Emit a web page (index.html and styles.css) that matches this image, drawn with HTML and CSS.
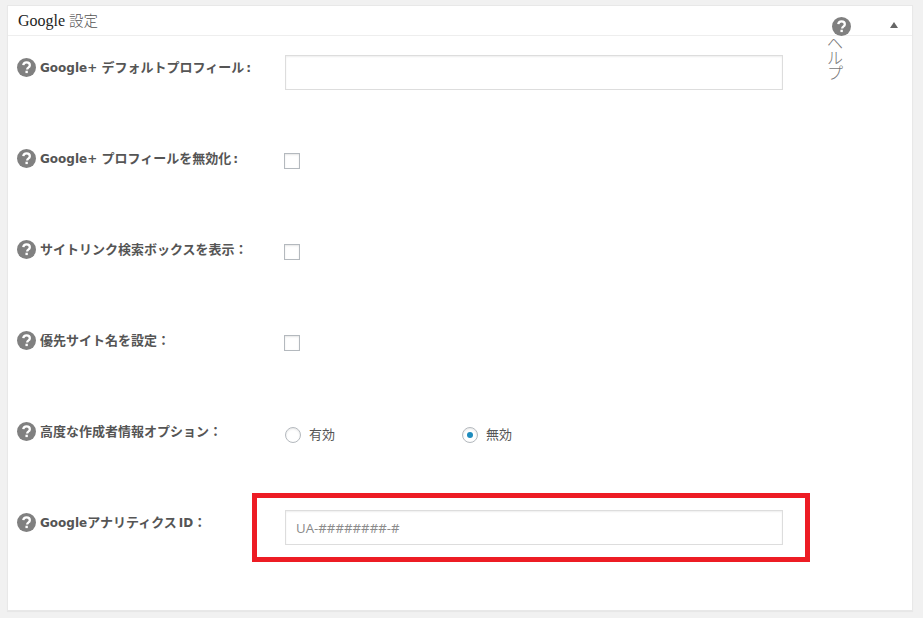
FILE: index.html
```html
<!DOCTYPE html>
<html lang="ja">
<head>
<meta charset="utf-8">
<title>Google 設定</title>
<link rel="stylesheet" href="styles.css">
</head>
<body>
<section class="panel">
  <header class="panel-head">
    <h2 class="panel-title">Google <span class="title-jp">設定</span></h2>
    <div class="help"><svg class="q-icon" viewBox="0 0 20 20"><use href="#q"/></svg><span class="help-text">ヘルプ</span></div>
    <span class="toggle"></span>
  </header>
  <svg class="defs" width="0" height="0"><defs><g id="q"><circle cx="10" cy="10" r="10" fill="#808080"/><path d="M6.6 7.6C6.8 5.6 8.2 4.6 10.1 4.6c2 0 3.4 1.1 3.4 2.9 0 1.3-.7 2-1.7 2.7-.8.5-1.1.9-1.1 1.8" fill="none" stroke="#fff" stroke-width="2.4"/><rect x="8.9" y="13.4" width="2.5" height="2.5" fill="#fff"/></g></defs></svg>
  <div class="row">
    <label class="label"><svg class="q-icon" viewBox="0 0 20 20"><use href="#q"/></svg><span><span class="latin">Google+ </span>デフォルトプロフィール<span class="latin colon">:</span></span></label>
    <div class="control"><input class="text" type="text"></div>
  </div>
  <div class="row">
    <label class="label"><svg class="q-icon" viewBox="0 0 20 20"><use href="#q"/></svg><span><span class="latin">Google+ </span>プロフィールを無効化<span class="latin colon">:</span></span></label>
    <div class="control control-check"><span class="check"></span></div>
  </div>
  <div class="row">
    <label class="label"><svg class="q-icon" viewBox="0 0 20 20"><use href="#q"/></svg><span>サイトリンク検索ボックスを表示：</span></label>
    <div class="control control-check"><span class="check"></span></div>
  </div>
  <div class="row">
    <label class="label"><svg class="q-icon" viewBox="0 0 20 20"><use href="#q"/></svg><span>優先サイト名を設定：</span></label>
    <div class="control control-check"><span class="check"></span></div>
  </div>
  <div class="row">
    <label class="label"><svg class="q-icon" viewBox="0 0 20 20"><use href="#q"/></svg><span>高度な作成者情報オプション：</span></label>
    <div class="control control-radio">
      <span class="radio-item"><span class="radio"></span><span class="radio-text">有効</span></span>
      <span class="radio-item"><span class="radio on"></span><span class="radio-text">無効</span></span>
    </div>
  </div>
  <div class="row">
    <label class="label"><svg class="q-icon" viewBox="0 0 20 20"><use href="#q"/></svg><span><span class="latin">Google</span>アナリティクス<span class="latin colon">ID</span>：</span></label>
    <div class="control"><input class="text" type="text" placeholder="UA-########-#"></div>
    <div class="highlight"></div>
  </div>
</section>
</body>
</html>
```

FILE: styles.css
```css
* { box-sizing: border-box; }
html, body { height: 100%; }
body {
  margin: 0;
  padding: 5px 10px 7px 7px;
  background: #f1f1f1;
  font-family: "Open Sans", "Noto Sans CJK JP", sans-serif;
  color: #555;
  overflow: hidden;
}
.panel {
  height: 606px;
  background: #fff;
  border: 1px solid #e8e8e8;
  box-shadow: 0 1px 1px rgba(0,0,0,.04);
}
.defs { position: absolute; }
.panel-head {
  height: 30px;
  border-bottom: 1px solid #eee;
  display: flex;
  align-items: flex-start;
  padding-left: 10px;
  position: relative;
}
.panel-title {
  margin: 4px 0 0;
  font: 400 16px/20px "Liberation Serif", "Noto Sans CJK JP", serif;
  color: #222;
  flex: 1;
}
.title-jp { color: #555; font-family: "Noto Sans CJK JP", sans-serif; font-weight: 300; font-size: 14.5px; }
.help {
  position: absolute;
  left: 824px;
  top: 11px;
  width: 20px;
  text-align: center;
}
.help .q-icon { display: block; margin: 0; }
.help-text {
  display: block;
  width: 16px;
  margin: 0 0 0 -5px;
  font-size: 16px;
  line-height: 15px;
  font-weight: 300;
  color: #777;
  word-break: break-all;
}
.toggle {
  position: absolute;
  left: 882px;
  top: 16px;
  width: 0;
  height: 0;
  border-left: 4px solid transparent;
  border-right: 4px solid transparent;
  border-bottom: 6px solid #666;
}
.row {
  display: grid;
  grid-template-columns: 268px 498px;
  height: 91px;
  padding-left: 9px;
  position: relative;
}
.label {
  display: flex;
  align-items: flex-start;
  gap: 4px;
  padding-top: 22px;
  font-size: 13px;
  line-height: 18px;
  font-weight: 700;
  color: #555;
  white-space: nowrap;
}
.latin { font-family: "DejaVu Sans", sans-serif; font-size: 12px; font-weight: 700; }
.colon { margin-left: 2px; }
.q-icon { width: 19px; height: 19px; flex: none; margin-top: 0; }
.control { padding-top: 19px; }
.control-check { padding-top: 26px; margin-left: -1px; }
.control-radio { padding-top: 25px; display: flex; font-size: 13px; line-height: 20px; }
.text {
  display: block;
  width: 498px;
  height: 35px;
  padding: 0 10px;
  border: 1px solid #ddd;
  box-shadow: inset 0 1px 2px rgba(0,0,0,.07);
  background: #fff;
  font: 13.25px "Open Sans", sans-serif;
}
.text::placeholder { color: #8a8a8a; opacity: 1; }
.check {
  display: block;
  width: 16px;
  height: 16px;
  border: 1px solid #b4b9be;
  box-shadow: inset 0 1px 2px rgba(0,0,0,.1);
  background: #fff;
}
.radio-item { display: flex; align-items: center; gap: 8px; width: 177px; height: 20px; }
.radio-text { margin-bottom: 2px; }
.radio {
  width: 16px;
  height: 16px;
  border-radius: 50%;
  border: 1px solid #b4b9be;
  box-shadow: inset 0 1px 2px rgba(0,0,0,.1);
  background: #fff;
  display: flex;
  align-items: center;
  justify-content: center;
}
.radio.on::before {
  content: "";
  width: 6px;
  height: 6px;
  border-radius: 50%;
  background: #1e8cbe;
}
.highlight {
  position: absolute;
  left: 244px;
  top: 2px;
  width: 558px;
  height: 69px;
  border: 5px solid #ed1c24;
}
```
